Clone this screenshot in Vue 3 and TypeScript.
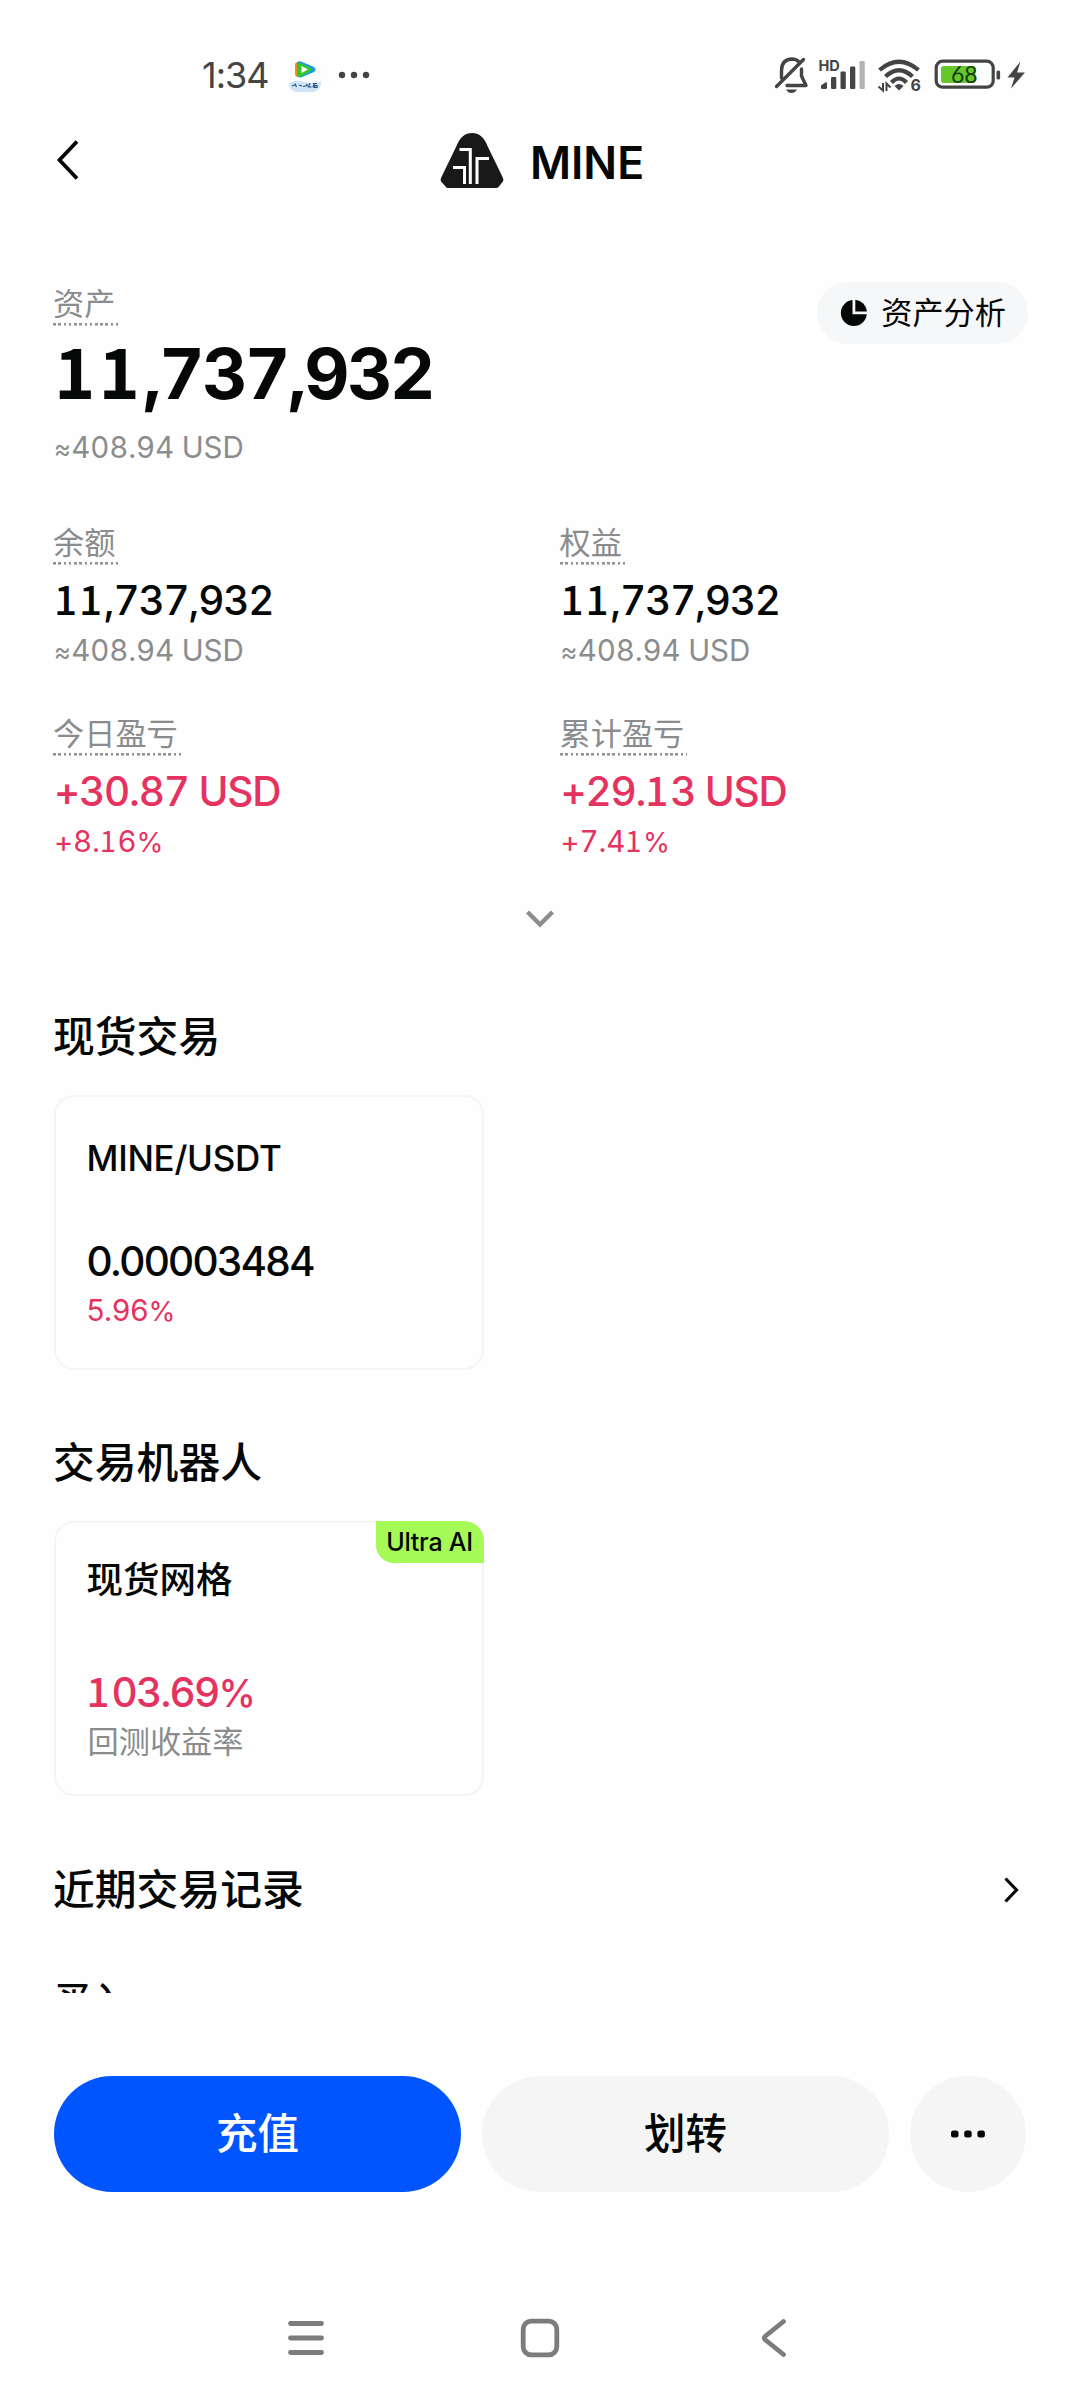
<script setup lang="ts">
import { h, type FunctionalComponent } from 'vue'

interface Stat {
  label: string
  value: string
  sub: string
  up?: boolean
}

const stats: Stat[] = [
  { label: '余额', value: '11,737,932', sub: '≈408.94 USD' },
  { label: '权益', value: '11,737,932', sub: '≈408.94 USD' },
  { label: '今日盈亏', value: '+30.87 USD', sub: '+8.16%', up: true },
  { label: '累计盈亏', value: '+29.13 USD', sub: '+7.41%', up: true },
]

// Figures use a "1" with a foot serif and a compact percent sign.
const Num: FunctionalComponent<{ text: string }> = (props) =>
  h(
    'span',
    props.text
      .split(/([1%≈])/)
      .filter((part) => part !== '')
      .map((part) => {
        if (part === '1') return h('span', { class: 'n-one' }, part)
        if (part === '%') return h('span', { class: 'n-pct' }, part)
        if (part === '≈') return h('span', { class: 'n-approx' }, part)
        return part
      }),
  )
Num.props = ['text']
</script>

<template>
  <div class="screen">
    <div class="status">
      <div class="status-left">
        <span class="clock">1:34</span>
        <svg class="app-icon" width="36" height="36" viewBox="0 0 36 36">
          <rect x="1" y="1" width="34" height="34" rx="9" fill="#fdfdfe" />
          <path d="M2 26 Q10 22 18 25 T34 24 V27 Q32 35 25 35 H11 Q3 35 2 27Z" fill="#cfe4f8" />
          <path d="M8 8 Q8 4.500 12 5 L17 7 V18 L12 20 Q8 20 8 17Z" fill="#f58a1f" />
          <path d="M10 7 Q10 3.500 14 4.500 L27 10 Q30 12.500 27 15 L14 20.500 Q10 21 10 17Z" fill="#1c9be6" />
          <path d="M10 8 Q10 5 14 6.500 L23 10.500 Q26 12.500 23 14.500 L14 19.500 Q10 20.500 10 17Z" fill="#35c826" />
          <path d="M14.500 9 L21 12.500 L14.500 16Z" fill="#fff" />
          <path d="M5 29 l4 -1.500 M8 26.500 l1.500 3.500 M12 28 l3 1 M16 29.500 l4 -1 M20 26.500 v3 M23 26 l-1.500 4 h3 M26 26.500 h4 M27.500 26 l-1.500 4.500 M27.500 28.500 h2.500 v2 h-2.500z" fill="none" stroke="#1d4e86" stroke-width="1.100" />
        </svg>
        <svg width="32" height="8" viewBox="0 0 32 8" fill="#444">
          <circle cx="4" cy="4" r="3.200" /><circle cx="16" cy="4" r="3.200" /><circle cx="28" cy="4" r="3.200" />
        </svg>
      </div>
      <svg class="status-right" width="280" height="46" viewBox="0 12 280 46">
        <g fill="none" stroke="#444" stroke-width="3.400" stroke-linecap="round" stroke-linejoin="round">
          <path d="M21.500 38 V30.500 Q21.500 19.500 32 19 Q36.500 19 39 22" />
          <path d="M41.500 29 V36 L46 45.500 H27" />
          <path d="M16.500 46.500 L43.500 19.500" />
        </g>
        <path d="M26 49.500 H37 Q35 53 31.500 53 T26 49.500Z" fill="#444" />
        <text x="58.500" y="31" class="hd">HD</text>
        <g fill="#444">
          <path d="M61 45.500 L66 42 Q67 42 67 43.500 V47.500 Q67 49 65.500 49 H62.500 Q61 49 61 47.500Z" />
          <rect x="71" y="37" width="5.300" height="12" rx="1.200" />
          <rect x="80.500" y="31.500" width="5.300" height="17.500" rx="1.200" />
          <rect x="90" y="26.500" width="5.300" height="22.500" rx="1.200" />
          <rect x="99.500" y="21" width="5.300" height="28" rx="1.200" fill="#b4b4b4" />
        </g>
        <g fill="none" stroke="#444" stroke-width="4.200">
          <path d="M119.500 30 Q139 13.500 158.500 30" />
          <path d="M125.500 36.500 Q139 24 152.500 36.500" />
          <path d="M131.500 42.500 Q139 34.500 146.500 42.500" />
        </g>
        <path d="M134.500 46 Q139 42 143.500 46 L139 50.500Z" fill="#444" />
        <g stroke="#444" stroke-width="2" fill="none">
          <path d="M123 43 V50.500 L118.500 46.500" /><path d="M126.500 51 V43.500 L130.500 47.500" />
        </g>
        <text x="150.500" y="51" class="six">6</text>
        <rect x="176.200" y="21.200" width="57" height="26" rx="6.500" fill="none" stroke="#444" stroke-width="3.200" />
        <rect x="181" y="26" width="34.500" height="17" rx="2.500" fill="#67c82d" />
        <text x="191" y="43" class="pct">68</text>
        <rect x="236.500" y="30.500" width="3.600" height="9" rx="1.600" fill="#444" />
        <path d="M260.500 21.500 L247.500 37.500 H254.500 L251 48.500 L265 32.500 H257Z" fill="#444" />
      </svg>
    </div>

    <header class="header">
      <svg class="back" width="24" height="44" viewBox="0 0 24 44">
        <path d="M21 3.500 L3.500 22 L21 40.500" fill="none" stroke="#060707" stroke-width="3.800" />
      </svg>
      <div class="title">
        <svg width="64" height="57" viewBox="0 0 64 57">
          <path d="M1 46 L16.500 14 Q21.500 1 32 1 T47.500 14 L63 46 Q64 49 62 50.500 L59 54.500 Q57.500 56 56 56 H8 Q6.500 56 5.500 54.500 L2 50.500 Q0 49 1 46Z" fill="#191919" />
          <g fill="none" stroke="#fff" stroke-width="3">
            <path d="M13 35.500 H24.500 V52" />
            <path d="M19.500 17.500 H30.300 V52" />
            <path d="M49 26.500 H37 V52" />
          </g>
        </svg>
        <span class="coin">MINE</span>
      </div>
    </header>

    <main class="content">
      <section class="assets">
        <div>
          <span class="label">资产</span>
          <div class="total"><Num text="11,737,932" /></div>
          <div class="sub"><Num text="≈408.94 USD" /></div>
        </div>
        <div class="analysis">
          <svg width="28" height="28" viewBox="0 0 28 28" fill="#060707">
            <path d="M12.500 1 A13 13 0 1 0 26.800 15.200 H12.500Z" />
            <path d="M15.300 .7 A13 13 0 0 1 27 12.400 H15.300Z" />
          </svg>
          <span>资产分析</span>
        </div>
      </section>

      <section class="stats">
        <div v-for="s in stats" :key="s.label" class="stat" :class="{ up: s.up }">
          <span class="label">{{ s.label }}</span>
          <div class="value"><Num :text="s.value" /></div>
          <div class="sub"><Num :text="s.sub" /></div>
        </div>
      </section>

      <div class="expand">
        <svg width="32" height="20" viewBox="0 0 32 20">
          <path d="M3.500 3 L16 15.500 L28.500 3" fill="none" stroke="#8a8c8e" stroke-width="4.400" />
        </svg>
      </div>

      <h2>现货交易</h2>
      <div class="card">
        <div class="name">MINE/USDT</div>
        <div class="figure price">0.00003484</div>
        <div class="note red"><Num text="5.96%" /></div>
      </div>

      <h2>交易机器人</h2>
      <div class="card bot">
        <span class="badge">Ultra AI</span>
        <div class="name">现货网格</div>
        <div class="figure red rate"><Num text="103.69%" /></div>
        <div class="note cjk">回测收益率</div>
      </div>

      <div class="recent">
        <h2>近期交易记录</h2>
        <svg width="20" height="30" viewBox="0 0 20 30">
          <path d="M4.500 3.500 L15.500 15 L4.500 26.500" fill="none" stroke="#060707" stroke-width="3.200" />
        </svg>
      </div>
      <div class="record">买入</div>
    </main>

    <div class="actions">
      <button class="primary">充值</button>
      <button>划转</button>
      <button class="more">
        <svg width="36" height="10" viewBox="0 0 36 10" fill="#060707">
          <rect x="1" y="1.500" width="7.500" height="7" rx="2.500" /><rect x="14.200" y="1.500" width="7.500" height="7" rx="2.500" /><rect x="27.400" y="1.500" width="7.500" height="7" rx="2.500" />
        </svg>
      </button>
    </div>

    <nav class="system">
      <svg width="44" height="44" viewBox="0 0 44 44"><path d="M6.500 7.500 H37.500 M6.500 22 H37.500 M6.500 36.500 H37.500" /></svg>
      <svg width="44" height="44" viewBox="0 0 44 44"><rect x="5.200" y="5.200" width="33.600" height="33.600" rx="8" /></svg>
      <svg width="44" height="44" viewBox="0 0 44 44"><path d="M31.500 5.500 L13.500 20 Q11 22 13.500 24 L31.500 38.500" /></svg>
    </nav>
  </div>
</template>

<style>
body {
  background: #fefefe;
}
.n-one {
  font-family: 'Noto Sans CJK SC', sans-serif;
  letter-spacing: 0.045em;
  line-height: 0;
}
.n-pct {
  font-size: 0.93em;
  line-height: 0;
}
.n-approx {
  font-size: 0.88em;
  letter-spacing: 0.02em;
  line-height: 0;
}
</style>

<style scoped>
.screen {
  width: 1080px;
  height: 2400px;
  overflow: hidden;
  background: #fefefe;
  color: #060707;
  font-family: Inter, 'Noto Sans CJK SC', sans-serif;
  display: flex;
  flex-direction: column;
}
.status {
  height: 46px;
  padding: 52px 40px 0 202px;
  display: flex;
  justify-content: space-between;
}
.status-left {
  display: flex;
  align-items: center;
}
.clock {
  width: 85px;
  font-size: 36px;
  line-height: 46px;
  letter-spacing: -1px;
  color: #444;
}
.app-icon {
  margin-right: 15px;
}
.hd {
  font: 700 14.5px Inter, sans-serif;
  fill: #444;
}
.six {
  font: 700 16px Inter, sans-serif;
  fill: #444;
}
.pct {
  font: 400 23px Lato, sans-serif;
  fill: #173c08;
}
.header {
  height: 84px;
  margin: 20px 0 2px;
  padding-left: 56px;
  display: flex;
  align-items: center;
}
.title {
  display: flex;
  align-items: center;
  margin-left: 360px;
  gap: 26px;
  font-size: 44.5px;
  line-height: 60px;
  font-weight: 600;
}
.coin {
  padding-top: 6px;
}
.content {
  height: 1789px;
  padding: 0 54px;
  overflow: hidden;
  flex: none;
  display: flow-root;
  box-sizing: border-box;
}
.assets {
  display: flex;
  justify-content: space-between;
  align-items: flex-start;
  padding-top: 78px;
}
.label {
  display: block;
  width: fit-content;
  margin-left: -1px;
  padding: 0 3px 4px 0;
  font-size: 31.2px;
  line-height: 37px;
  height: 36px;
  color: #8a8c8e;
  background: repeating-linear-gradient(90deg, #909294 0 2.6px, transparent 2.6px 5.25px) 0 100% / 100% 2.6px no-repeat;
}
.assets .label {
  margin-top: 4px;
}
.total {
  margin-top: 13px;
  height: 70px;
  line-height: 70px;
  font-size: 70px;
  font-weight: 650;
  letter-spacing: -0.034em;
  font-feature-settings: 'tnum';
}
.assets .sub {
  margin-top: 20px;
}
.sub {
  height: 36px;
  line-height: 36px;
  font-size: 29.5px;
  color: #8a8c8e;
  letter-spacing: -0.005em;
  font-feature-settings: 'tnum';
}
.analysis {
  display: flex;
  align-items: center;
  height: 62px;
  line-height: 62px;
  margin-right: -2px;
  padding: 0 22px 0 23px;
  gap: 13px;
  border-radius: 31px;
  background: #f6f7f8;
  font-size: 31.2px;
}
.stats {
  display: grid;
  grid-template-columns: 506.5px 1fr;
  row-gap: 48px;
  margin-top: 60px;
}
.value {
  margin-top: 14px;
  height: 44px;
  line-height: 44px;
  font-size: 40.5px;
  font-weight: 500;
  letter-spacing: -0.03em;
  font-feature-settings: 'tnum';
}
.stat .sub {
  margin-top: 9px;
}
.up .value,
.up .sub,
.red {
  color: #e5325e;
}
.expand {
  display: flex;
  justify-content: center;
  margin-top: 50px;
}
h2 {
  margin: 83px 0 33px -1px;
  height: 50px;
  line-height: 50px;
  font-size: 41.8px;
  font-weight: 500;
}
.card {
  position: relative;
  width: 430px;
  height: 275px;
  margin-left: -0.5px;
  box-sizing: border-box;
  border: 2.5px solid #f4f5f5;
  border-radius: 20px;
  padding: 38px 31px 0;
}
.name {
  height: 46px;
  line-height: 46px;
  font-size: 35px;
  font-weight: 500;
  letter-spacing: -0.008em;
}
.figure {
  height: 44px;
  line-height: 44px;
  font-size: 40.5px;
  font-weight: 500;
  letter-spacing: -0.043em;
}
.price {
  margin-top: 59px;
}
.note {
  height: 36px;
  line-height: 36px;
  margin-top: 8px;
  font-size: 29.5px;
}
.note.cjk {
  margin-top: 9px;
  margin-left: 1px;
  font-size: 31.2px;
  color: #8a8c8e;
}
.card + h2 {
  margin: 68px 0 33px -1px;
}
.bot {
  padding-top: 34px;
}
.bot .name {
  font-size: 36.5px;
  letter-spacing: 0;
}
.rate {
  margin-top: 68px;
  font-feature-settings: 'tnum';
}
.badge {
  position: absolute;
  top: -2px;
  right: -2px;
  width: 108px;
  height: 42px;
  border-radius: 0 20px 0 18px;
  background: #a6fa55;
  text-align: center;
  font-size: 25px;
  line-height: 42px;
  font-weight: 500;
  letter-spacing: -0.01em;
}
.recent {
  display: flex;
  justify-content: space-between;
  align-items: center;
  margin-top: 69px;
  padding-right: 5px;
}
.recent h2 {
  margin: 0 0 0 -1px;
}
.record {
  margin-top: 60px;
  height: 50px;
  line-height: 50px;
  font-size: 36px;
  font-weight: 500;
}
.actions {
  display: flex;
  gap: 21px;
  margin-top: 83px;
  padding: 0 54px;
}
button {
  flex: 1;
  height: 116px;
  border: 0;
  border-radius: 58px;
  padding: 0;
  background: #f5f5f5;
  color: #060707;
  font: 500 41.5px/116px Inter, 'Noto Sans CJK SC', sans-serif;
}
.primary {
  background: #0055ff;
  color: #fff;
}
.more {
  flex: none;
  width: 116px;
  display: flex;
  align-items: center;
  justify-content: center;
}
.system {
  display: flex;
  justify-content: space-between;
  margin-top: 124px;
  padding: 0 284px;
}
.system svg {
  fill: none;
  stroke: #7c7c7c;
  stroke-width: 4.8;
  stroke-linecap: round;
  stroke-linejoin: round;
}
</style>
